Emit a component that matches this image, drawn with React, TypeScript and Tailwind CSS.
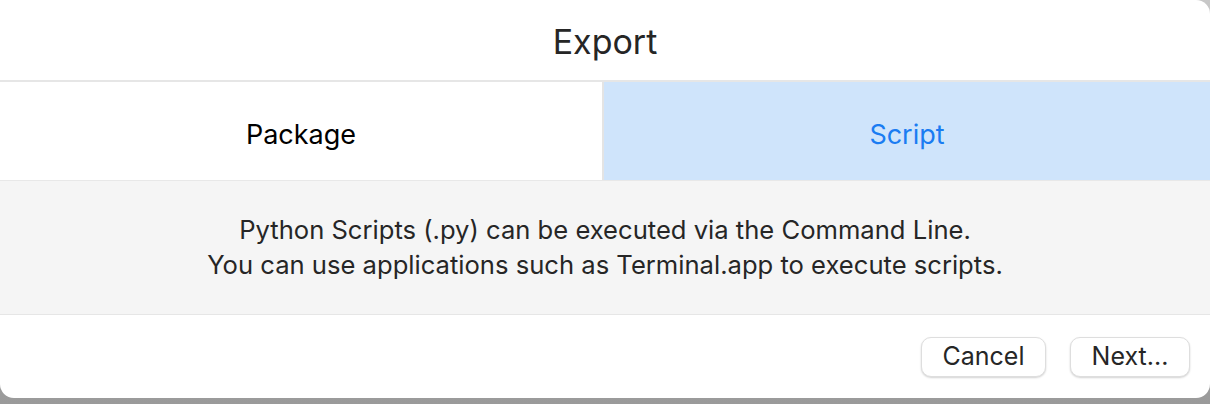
import React from "react";

const font = { fontFamily: "Inter, 'Noto Sans', sans-serif" };

const DialogButton = ({ label, width }: { label: string; width: string }) => (
  <button
    className={`${width} h-[40px] rounded-[10px] bg-white border border-[#dedede] shadow-[0_1px_2px_rgba(0,0,0,0.18)] text-[25px] text-[#262626] leading-none`}
  >
    {label}
  </button>
);

export default function App() {
  return (
    <div className="w-[1210px] h-[404px] bg-gradient-to-b from-[#c8c8c8] to-[#9a9a9a]" style={font}>
      <div className="h-[398px] bg-white rounded-b-[14px] rounded-tr-[14px] flex flex-col overflow-hidden">
        <div className="h-[82px] flex items-center justify-center border-b-2 border-[#e6e6e6]">
          <h1 className="text-[34px] text-[#262626] pt-[3px]">Export</h1>
        </div>
        <div className="flex h-[99px] border-b border-[#e8e8e8]">
          <div className="w-[602px] flex items-center justify-center text-[27px] text-black pt-[8px]">
            Package
          </div>
          <div className="w-[2px] bg-[#e4e4e4]" />
          <div className="flex-1 bg-[#cfe4fb] flex items-center justify-center text-[27px] text-[#1a7cf2] pt-[8px]">
            Script
          </div>
        </div>
        <div className="h-[134px] bg-[#f5f5f5] border-b border-[#e6e6e6] flex flex-col items-center justify-center text-[25.6px] leading-[35px] text-[#262626] pb-[2px]">
          <p>Python Scripts (.py) can be executed via the Command Line.</p>
          <p>You can use applications such as Terminal.app to execute scripts.</p>
        </div>
        <div className="flex-1 flex items-center justify-end gap-[24px] pr-[20px]">
          <DialogButton label="Cancel" width="w-[125px]" />
          <DialogButton label="Next..." width="w-[120px]" />
        </div>
      </div>
    </div>
  );
}
